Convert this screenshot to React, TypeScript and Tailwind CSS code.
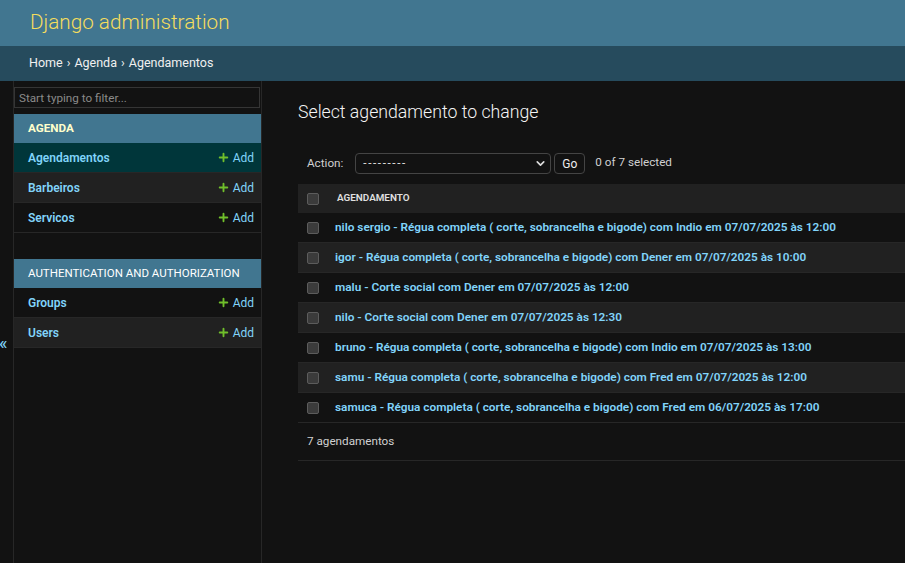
import { Plus, ChevronDown } from "lucide-react";

const font = { fontFamily: "Roboto, 'Noto Sans', sans-serif" };

const agendamentos = [
  "nilo sergio - Régua completa ( corte, sobrancelha e bigode) com Indio em 07/07/2025 às 12:00",
  "igor - Régua completa ( corte, sobrancelha e bigode) com Dener em 07/07/2025 às 10:00",
  "malu - Corte social com Dener em 07/07/2025 às 12:00",
  "nilo - Corte social com Dener em 07/07/2025 às 12:30",
  "bruno - Régua completa ( corte, sobrancelha e bigode) com Indio em 07/07/2025 às 13:00",
  "samu - Régua completa ( corte, sobrancelha e bigode) com Fred em 07/07/2025 às 12:00",
  "samuca - Régua completa ( corte, sobrancelha e bigode) com Fred em 06/07/2025 às 17:00",
];

function Checkbox() {
  return <span className="block h-[12px] w-[12px] rounded-[2px] border border-[#5c5c5c] bg-[#3b3b3b]" />;
}

function SidebarRow({ name, bg }: { name: string; bg: string }) {
  return (
    <div className={`flex h-[30px] items-center justify-between border-b border-[#272727] pl-[14px] pr-[7px] ${bg}`}>
      <a className="text-[12px] font-semibold text-[#81d4fa]">{name}</a>
      <a className="flex items-center gap-[3px] text-[12px] text-[#81d4fa]">
        <Plus size={13} strokeWidth={3.5} className="text-[#70bf2b]" />
        Add
      </a>
    </div>
  );
}

export default function App() {
  return (
    <div className="flex h-[563px] flex-col overflow-hidden bg-[#121212] text-[#eeeeee]" style={font}>
      {/* header */}
      <header className="flex h-[46px] shrink-0 items-center bg-[#417690] px-[30px]">
        <h1 className="text-[20.7px] font-light text-[#f5dd5d]">Django administration</h1>
      </header>
      <div className="flex h-[35px] shrink-0 items-center bg-[#264b5d] px-[29px] text-[12.5px] text-[#f0f0f0]">
        <a>Home</a>
        <span className="mx-[4px]">›</span>
        <a>Agenda</a>
        <span className="mx-[4px]">›</span>
        <span>Agendamentos</span>
      </div>

      <div className="flex min-h-0 flex-1">
        {/* toggle */}
        <div className="w-[14px] shrink-0 overflow-hidden border-r border-[#272727] pt-[252px]">
          <span className="-ml-[1px] block text-[18px] leading-[20px] text-[#81d4fa]">«</span>
        </div>

        {/* sidebar */}
        <nav className="w-[248px] shrink-0 border-r border-[#272727]">
          <input
            placeholder="Start typing to filter..."
            className="mt-[6px] block h-[21px] w-[246px] border border-[#353535] bg-[#121212] px-[4px] text-[11.7px] text-[#eee] placeholder:text-[#8a8a8a] focus:outline-none"
          />
          <div className="mt-[6px]">
            <div className="flex h-[29px] items-center bg-[#417690] pl-[14px] text-[11.7px] font-bold text-[#ffffcc]">AGENDA</div>
            <SidebarRow name="Agendamentos" bg="bg-[#00363a]" />
            <SidebarRow name="Barbeiros" bg="bg-[#212121]" />
            <SidebarRow name="Servicos" bg="bg-[#121212]" />
          </div>
          <div className="mt-[26px]">
            <div className="flex h-[29px] items-center bg-[#417690] pl-[14px] text-[11.5px] text-white">
              AUTHENTICATION AND AUTHORIZATION
            </div>
            <SidebarRow name="Groups" bg="bg-[#121212]" />
            <SidebarRow name="Users" bg="bg-[#212121]" />
          </div>
        </nav>

        {/* content */}
        <main className="min-w-0 flex-1 pl-[36px] pt-[19px]">
          <h1 className="mb-[19px] h-[24px] text-[17.7px] font-light leading-[24px] text-[#f5f5f5]">
            Select agendamento to change
          </h1>

          <div className="flex h-[41px] items-center pl-[9px] text-[11.7px] text-[#d0d0d0]">
            <label>Action:</label>
            <div className="ml-[12px] flex h-[21px] w-[196px] items-center justify-between rounded-[4px] border border-[#444] bg-[#121212] pl-[7px] pr-[3px] text-[#eee]">
              <span className="tracking-[1.6px]">---------</span>
              <ChevronDown size={13} strokeWidth={3} className="text-[#ddd]" />
            </div>
            <button className="ml-[3px] h-[21px] w-[31px] rounded-[4px] border border-[#444] bg-[#121212] text-[12px] text-[#eee]">
              Go
            </button>
            <span className="ml-[10px] -mt-[2px]">0 of 7 selected</span>
          </div>

          <div className="w-[700px]">
            <div className="flex h-[29px] items-center bg-[#212121] pl-[9px]">
              <Checkbox />
              <span className="ml-[18px] text-[9.9px] font-semibold uppercase text-[#e0e0e0]">Agendamento</span>
            </div>
            {agendamentos.map((a, i) => (
              <div
                key={i}
                className={`flex h-[30px] items-center border-b border-[#272727] pl-[9px] ${i % 2 === 1 ? "bg-[#212121]" : "bg-[#121212]"}`}
              >
                <Checkbox />
                <a className="ml-[16px] whitespace-nowrap text-[11.8px] font-semibold text-[#81d4fa]">{a}</a>
              </div>
            ))}
            <div className="flex h-[38px] items-center border-b border-[#272727] pl-[9px] text-[11.7px] text-[#d0d0d0]">
              7 agendamentos
            </div>
          </div>
        </main>
      </div>
    </div>
  );
}
